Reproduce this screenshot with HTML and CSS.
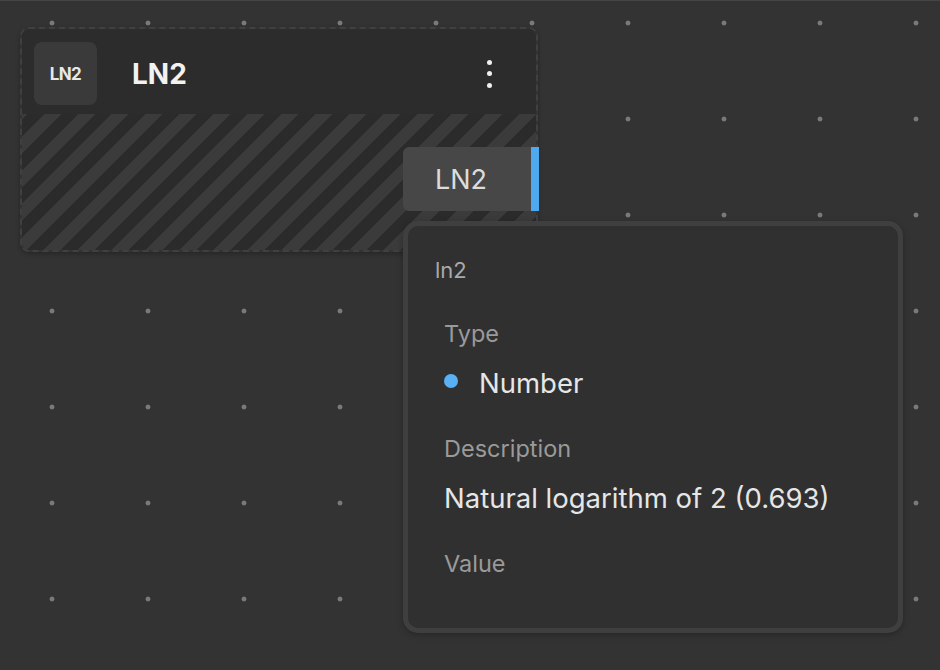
FILE: index.html
```html
<!DOCTYPE html>
<html lang="en">
<head>
<meta charset="utf-8">
<title>LN2 node</title>
<link rel="stylesheet" href="styles.css">
</head>
<body>
<div class="canvas">
  <div class="node">
    <div class="node-header">
      <div class="node-icon">LN2</div>
      <div class="node-title">LN2</div>
      <div class="kebab"><span></span><span></span><span></span></div>
    </div>
    <div class="node-body"></div>
  </div>
  <div class="port">
    <span class="port-label">LN2</span>
    <span class="port-bar"></span>
  </div>
  <div class="tooltip">
    <div class="tip-name">ln2</div>
    <div class="tip-fields">
      <div class="field-label">Type</div>
      <div class="field-value type-value"><span class="type-dot"></span>Number</div>
      <div class="field-label">Description</div>
      <div class="field-value">Natural logarithm of 2 (0.693)</div>
      <div class="field-label">Value</div>
    </div>
  </div>
</div>
</body>
</html>
```
FILE: styles.css
```css
html, body {
  margin: 0;
  padding: 0;
  background: #333333;
}
body {
  font-family: Inter, "Noto Sans", "Liberation Sans", sans-serif;
  color: #e6e6e6;
}
.canvas {
  position: relative;
  width: 940px;
  height: 670px;
  overflow: hidden;
  box-sizing: border-box;
  border-top: 1px solid #454545;
  background-color: #333333;
  background-image: radial-gradient(circle at center, #7a7a7a 0, #7a7a7a 2px, transparent 2.8px);
  background-size: 96px 96px;
  background-position: 4px -26px;
}
.node {
  position: absolute;
  left: 20px;
  top: 26px;
  width: 518px;
  height: 225px;
  box-sizing: border-box;
  border: 2px dashed #404040;
  border-radius: 9px;
  overflow: hidden;
  display: flex;
  flex-direction: column;
  box-shadow: 0 2px 4px rgba(0,0,0,0.25);
}
.node-header {
  height: 85px;
  box-sizing: border-box;
  flex: none;
  background: #2c2c2c;
  display: flex;
  align-items: center;
  padding: 4px 0 0 12px;
}
.node-icon {
  width: 63px;
  height: 63px;
  border-radius: 8px;
  background: #3a3a3a;
  display: flex;
  align-items: center;
  justify-content: center;
  font-size: 17px;
  font-weight: 700;
  letter-spacing: -0.6px;
  color: #e8e8e8;
}
.node-title {
  margin-left: 35px;
  font-size: 28px;
  font-weight: 700;
  color: #f2f2f2;
  flex: 1;
}
.kebab {
  width: 6px;
  display: flex;
  flex-direction: column;
  gap: 6.5px;
  margin-right: 43px;
}
.kebab span {
  width: 5px;
  height: 5px;
  border-radius: 50%;
  background: #f0f0f0;
}
.node-body {
  flex: 1;
  background: repeating-linear-gradient(-45deg, #3b3b3b 0, #3b3b3b 12px, #2b2b2b 12px, #2b2b2b 24px);
}
.port {
  position: absolute;
  left: 403px;
  top: 146px;
  height: 64px;
  display: flex;
}
.port-label {
  width: 128px;
  box-sizing: border-box;
  padding-left: 32px;
  background: #474747;
  border-radius: 6px 0 0 6px;
  display: flex;
  align-items: center;
  font-size: 27px;
  color: #dcdcdc;
}
.port-bar {
  width: 8px;
  background: #4fa9ee;
}
.tooltip {
  position: absolute;
  left: 403px;
  top: 220px;
  width: 500px;
  height: 412px;
  box-sizing: border-box;
  border: 5px solid #3f3f3f;
  border-radius: 15px;
  background: #303030;
  padding: 31px 27px 0 27px;
  box-shadow: 0 2px 6px rgba(0,0,0,0.25);
}
.tip-name {
  font-size: 22px;
  color: #a9a9a9;
  line-height: 26px;
}
.tip-fields {
  padding-left: 9px;
  margin-top: 37px;
}
.field-label {
  font-size: 23.5px;
  color: #9a9a9a;
  line-height: 28px;
  margin-bottom: 21px;
}
.field-value {
  font-size: 27.5px;
  color: #e6e6e6;
  line-height: 28px;
  margin-bottom: 38px;
}
.type-value {
  display: flex;
  align-items: center;
}
.type-dot {
  width: 14px;
  height: 14px;
  border-radius: 50%;
  background: #5ab0f4;
  margin-right: 21px;
  position: relative;
  top: -2px;
}
```
